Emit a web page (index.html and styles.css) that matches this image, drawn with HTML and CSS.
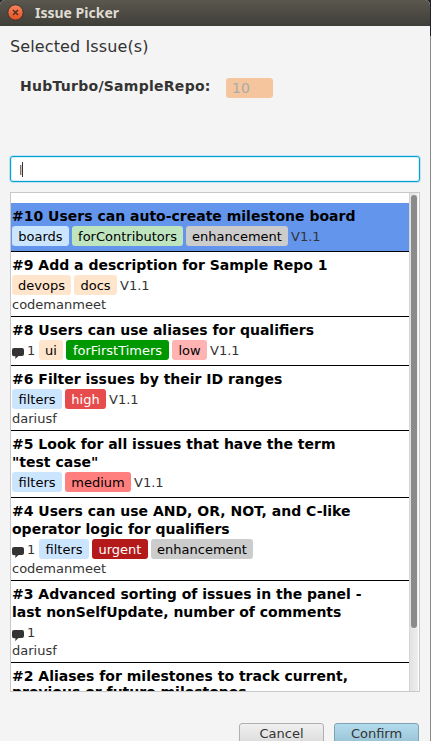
FILE: index.html
```html
<!DOCTYPE html>
<html lang="en">
<head>
<meta charset="utf-8">
<title>Issue Picker</title>
<link rel="stylesheet" href="styles.css">
</head>
<body>
<svg class="defs" width="0" height="0"><symbol id="comment" viewBox="0 0 12 12"><path d="M2 1h8q2 0 2 2v4q0 2-2 2H6.500L3.200 12L3.500 9.300H2Q0 9.300 0 7.300V3Q0 1 2 1z" fill="#333"/></symbol></svg>
<div class="window">
  <header class="titlebar">
    <svg class="close" viewBox="0 0 17 17"><defs><linearGradient id="g" x2="0" y2="1"><stop offset="0" stop-color="#f58560"/><stop offset="1" stop-color="#e3511f"/></linearGradient></defs><circle cx="8.500" cy="8.500" r="7.700" fill="url(#g)" stroke="#3a332b"/><path d="M6 6l5 5M11 6l-5 5" stroke="#4c2a1c" stroke-width="1.300"/></svg>
    <h1>Issue Picker</h1>
  </header>
  <main>
    <h2>Selected Issue(s)</h2>
    <div class="selected"><b>HubTurbo/SampleRepo:</b><span class="number">10</span></div>
    <div class="query"><span class="caret"></span></div>
    <div class="list">
      <div class="rows">
        <div class="row active"><h3>#10 Users can auto-create milestone board</h3><div class="meta"><span class="chip blue w57">boards</span><span class="chip green w111">forContributors</span><span class="chip gray w102">enhancement</span><span>V1.1</span></div></div>
        <div class="row"><h3>#9 Add a description for Sample Repo 1</h3><div class="meta"><span class="chip peach w59">devops</span><span class="chip peach w43">docs</span><span>V1.1</span></div><p>codemanmeet</p></div>
        <div class="row"><h3>#8 Users can use aliases for qualifiers</h3><div class="meta"><svg><use href="#comment"/></svg><span class="count">1</span><span class="chip peach w24">ui</span><span class="chip deepgreen w103">forFirstTimers</span><span class="chip pink w35">low</span><span>V1.1</span></div></div>
        <div class="row"><h3>#6 Filter issues by their ID ranges</h3><div class="meta"><span class="chip blue w50">filters</span><span class="chip red w41">high</span><span>V1.1</span></div><p>dariusf</p></div>
        <div class="row"><h3>#5 Look for all issues that have the term<br>"test case"</h3><div class="meta"><span class="chip blue w50">filters</span><span class="chip salmon w66">medium</span><span>V1.1</span></div></div>
        <div class="row"><h3>#4 Users can use AND, OR, NOT, and C-like<br>operator logic for qualifiers</h3><div class="meta"><svg><use href="#comment"/></svg><span class="count">1</span><span class="chip blue w50">filters</span><span class="chip crimson w56">urgent</span><span class="chip gray w102">enhancement</span></div><p>codemanmeet</p></div>
        <div class="row"><h3>#3 Advanced sorting of issues in the panel -<br>last nonSelfUpdate, number of comments</h3><div class="meta bare"><svg><use href="#comment"/></svg><span class="count">1</span></div><p>dariusf</p></div>
        <div class="row last"><h3>#2 Aliases for milestones to track current,<br>previous or future milestones</h3></div>
      </div>
      <div class="scrollbar"><div class="thumb"></div></div>
    </div>
    <footer><button>Cancel</button><button class="confirm">Confirm</button></footer>
  </main>
</div>
</body>
</html>
```
FILE: styles.css
```css
* { box-sizing: border-box; }
html { background: #8a8a8a; }
body { margin: 0; height: 741px; overflow: hidden; font: 13px "DejaVu Sans", sans-serif; color: #333; background: linear-gradient(#20242a 36px, #8a8a8a 36px); }
h1, h2, h3, p { margin: 0; }
.defs { display: block; }
.window { width: 430px; height: 741px; background: #f4f4f4; border-radius: 5px 5px 0 0; overflow: hidden; }
.titlebar { height: 26px; display: flex; align-items: center; padding-left: 7px; background: linear-gradient(#5a574e, #3f3e38); }
.close { width: 17px; height: 17px; margin-top: -1px; }
h1 { margin-left: 11px; font: bold 14px/26px "Noto Sans", sans-serif; color: #dfdbd2; white-space: nowrap; }
main { height: 715px; padding: 10px 10px 0; display: flex; flex-direction: column; }
h2 { font-size: 16px; font-weight: normal; line-height: 22px; height: 20px; letter-spacing: .12px; }
.selected { height: 20px; margin: 22px 0 0 10px; display: flex; line-height: 17px; }
.selected b { width: 206px; font-size: 14px; letter-spacing: .27px; line-height: 16px; white-space: nowrap; }
.number { width: 47px; height: 20px; padding-left: 6px; font-size: 14px; line-height: 21px; border-radius: 3px; background: #f5c69e; color: #aaa; }
.query { height: 26px; flex: none; margin-top: 58px; border: 1px solid #039ed3; border-radius: 3px; background: #fff; box-shadow: 0 0 0 1px #bfe3f0, inset 0 0 0 1px #d9f1f8; padding: 5px 0 0 9px; }
.caret { display: block; width: 3px; height: 15px; background: linear-gradient(#333, #333) 2px 0 / 1px 15px no-repeat, linear-gradient(90deg, #b5653c 1px, #a8cfe8 1px) 0 3px / 2px 10px no-repeat; }
.list { height: 500px; flex: none; margin-top: 10px; border: 1px solid #c8c8c8; background: #fff; display: flex; overflow: hidden; }
.rows { width: 398px; padding-top: 10px; flex: none; }
.row { padding: 4px 0 5px 1px; border-bottom: 1px solid #000; }
.active { background: #6495ed; }
h3 { padding-bottom: 1px; font-size: 14px; line-height: 18px; color: #000; white-space: nowrap; }
.last h3 { padding-top: 1px; line-height: 16px; }
.meta { height: 20px; display: flex; gap: 3px; line-height: 22px; white-space: nowrap; }
.bare { height: 19px; }
.meta svg { width: 12px; height: 12px; margin-top: 7px; }
.count { width: 9px; }
.row p { height: 16px; line-height: 20px; }
.chip { border-radius: 3px; text-align: center; color: #000; }
.blue { background: #cce5ff; }
.green { background: #bfe5bf; }
.gray { background: #ccc; }
.peach { background: #ffe5cc; }
.deepgreen { background: #009800; color: #fff; }
.pink { background: #ffb3b3; }
.red { background: #e74c4c; color: #fff; }
.salmon { background: #ff7f7f; }
.crimson { background: #b41a1a; color: #fff; }
.w24 { width: 24px; }
.w35 { width: 35px; }
.w41 { width: 41px; }
.w43 { width: 43px; }
.w50 { width: 50px; }
.w56 { width: 56px; }
.w57 { width: 57px; }
.w59 { width: 59px; }
.w66 { width: 66px; }
.w102 { width: 102px; }
.w103 { width: 103px; }
.w111 { width: 111px; }
.scrollbar { flex: 1; border-left: 1px solid #d5d5d5; background: linear-gradient(90deg, #e2e2e2, #eee 8px, #fff 8px); padding: 2px 0 0 1px; }
.thumb { width: 6px; height: 433px; border-radius: 3px; background: #8b8b8b; }
footer { display: flex; justify-content: flex-end; gap: 10px; margin-top: 31px; padding-right: 1px; }
button { width: 85px; height: 25px; flex: none; padding: 0 0 5px; border: 1px solid #b0b0b0; border-radius: 3px; background: linear-gradient(#f0f0f0, #d8d8d8); font: 13px "DejaVu Sans", sans-serif; color: #333; }
.confirm { border-color: #7ea4b4; background: linear-gradient(#b2dbed, #96bed2); }
```
